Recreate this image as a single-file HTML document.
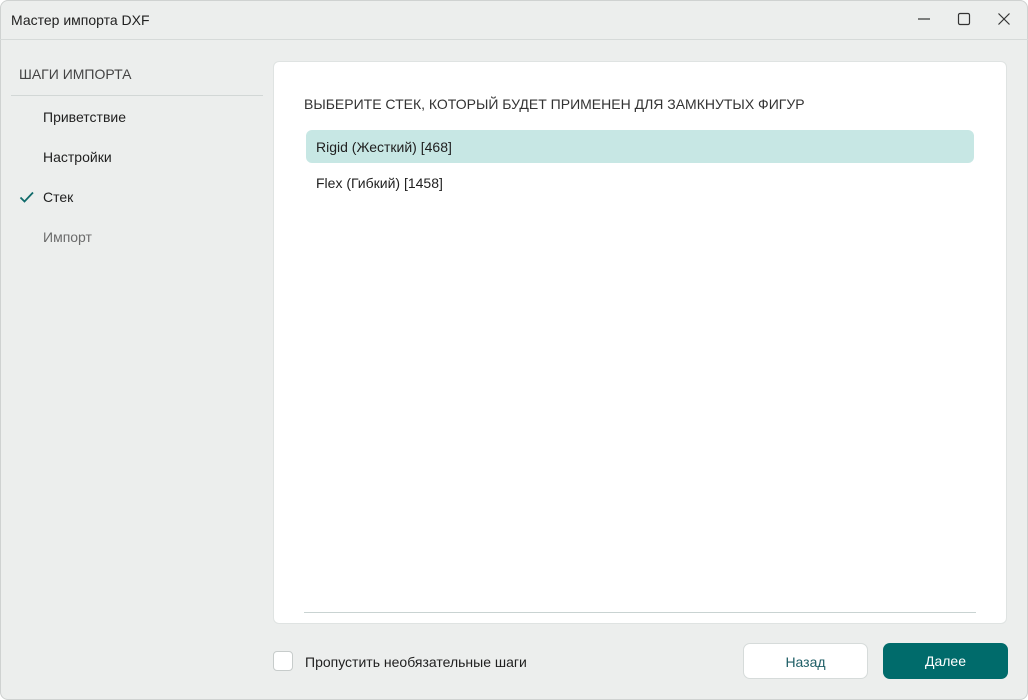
<!DOCTYPE html>
<html><head><meta charset="utf-8"><style>
*{box-sizing:border-box;margin:0;padding:0}
body{width:1028px;height:700px;background:#fff;font-family:"Liberation Sans",sans-serif;font-size:14px;color:#1f1f1f;position:relative;overflow:hidden}
.win{position:absolute;left:0;top:0;width:1028px;height:700px;background:#eceeed;box-shadow:inset 0 0 0 1px #cfd2d1;border-radius:8px;overflow:hidden}
.title{position:absolute;left:11px;top:12px;font-size:14px}
.tb{position:absolute;top:0;left:0;right:0;height:40px;border-bottom:1px solid #d6dad9}
.ctl{position:absolute;top:12px;width:14px;height:14px}
.side-h{position:absolute;left:19px;top:66px;color:#444;font-size:14px}
.sep{position:absolute;left:11px;top:95px;width:252px;height:1px;background:#d2d7d6}
.step{position:absolute;left:43px;font-size:14px}
.panel{position:absolute;left:273px;top:61px;width:734px;height:563px;background:#fff;border:1px solid #dfe3e2;border-radius:6px}
.ph{position:absolute;left:30px;top:34px;font-size:14px;color:#333}
.sel{position:absolute;left:32px;top:68px;width:668px;height:33px;background:#c7e7e4;border-radius:6px}
.it{position:absolute;left:42px;font-size:14px}
.line{position:absolute;left:30px;top:550px;width:672px;height:1px;background:#c9d3d2}
.chk{position:absolute;left:273px;top:651px;width:20px;height:20px;border:1px solid #c7cccb;border-radius:4px;background:#fff}
.btn{position:absolute;top:643px;height:36px;border-radius:7px;font-size:14px;text-align:center;line-height:36px}
</style></head><body>
<div class="win">
<div class="tb"></div>
<div class="title">Мастер импорта DXF</div>
<svg class="ctl" style="left:917px" viewBox="0 0 14 14"><line x1="1" y1="7" x2="13" y2="7" stroke="#333" stroke-width="1.2"/></svg>
<svg class="ctl" style="left:957px" viewBox="0 0 14 14"><rect x="1.5" y="1.5" width="11" height="11" rx="1.5" fill="none" stroke="#333" stroke-width="1.2"/></svg>
<svg class="ctl" style="left:997px" viewBox="0 0 14 14"><path d="M1.5 1.5L12.5 12.5M12.5 1.5L1.5 12.5" stroke="#333" stroke-width="1.2"/></svg>
<div class="side-h">ШАГИ ИМПОРТА</div>
<div class="sep"></div>
<div class="step" style="top:109px">Приветствие</div>
<div class="step" style="top:149px">Настройки</div>
<svg style="position:absolute;left:19px;top:190px" width="16" height="14" viewBox="0 0 16 14"><path d="M1.5 7.5L5.5 11.5L14 2.5" fill="none" stroke="#0f6a6a" stroke-width="1.8"/></svg>
<div class="step" style="top:189px">Стек</div>
<div class="step" style="top:229px;color:#6b6b6b">Импорт</div>
<div class="panel">
<div class="ph">ВЫБЕРИТЕ СТЕК, КОТОРЫЙ БУДЕТ ПРИМЕНЕН ДЛЯ ЗАМКНУТЫХ ФИГУР</div>
<div class="sel"></div>
<div class="it" style="top:77px">Rigid (Жесткий) [468]</div>
<div class="it" style="top:113px">Flex (Гибкий) [1458]</div>
<div class="line"></div>
</div>
<div class="chk"></div>
<div style="position:absolute;left:305px;top:654px">Пропустить необязательные шаги</div>
<div class="btn" style="left:743px;width:125px;background:#fff;border:1px solid #d6dbda;color:#1e5e66">Назад</div>
<div class="btn" style="left:883px;width:125px;background:#006b6b;color:#fff">Далее</div>
</div>
</body></html>
